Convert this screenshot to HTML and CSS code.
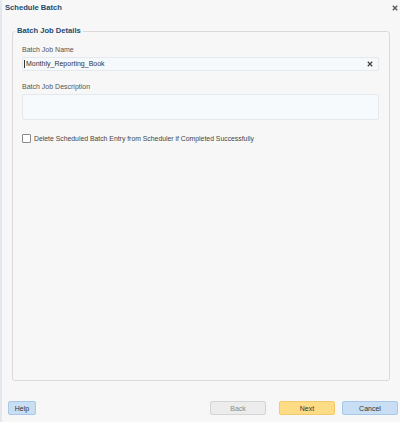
FILE: index.html
```html
<!DOCTYPE html>
<html>
<head>
<meta charset="utf-8">
<link rel="stylesheet" href="styles.css">
</head>
<body>
<div class="dialog">
  <div class="header">
    <span class="title">Schedule Batch</span>
    <svg class="close" width="6" height="6" viewBox="0 0 6 6"><path d="M0.8 0.8 L5.2 5.2 M5.2 0.8 L0.8 5.2" stroke="#555" stroke-width="1.3"/></svg>
  </div>
  <fieldset class="group">
    <legend class="legend">Batch Job Details</legend>
    <div class="field">
      <label class="label">Batch Job Name</label>
      <div class="input">
        <span class="value">Monthly_Reporting_Book</span>
        <svg class="clear" width="6" height="6" viewBox="0 0 6 6"><path d="M0.8 0.8 L5.2 5.2 M5.2 0.8 L0.8 5.2" stroke="#444" stroke-width="1.3"/></svg>
      </div>
    </div>
    <div class="field">
      <label class="label">Batch Job Description</label>
      <div class="textarea"></div>
    </div>
    <div class="check-row">
      <span class="checkbox"></span>
      <span class="check-label">Delete Scheduled Batch Entry from Scheduler if Completed Successfully</span>
    </div>
  </fieldset>
  <div class="footer">
    <button class="btn btn-help">Help</button>
    <div class="spacer"></div>
    <button class="btn btn-back">Back</button>
    <button class="btn btn-next">Next</button>
    <button class="btn btn-cancel">Cancel</button>
  </div>
</div>
</body>
</html>
```

FILE: styles.css
```css
html, body {
  margin: 0;
  padding: 0;
  background: #f7f7f7;
}
body {
  font-family: "Liberation Sans", Arial, sans-serif;
  font-size: 7px;
  color: #444;
}
.dialog {
  width: 400px;
  height: 422px;
  box-sizing: border-box;
  display: flex;
  flex-direction: column;
  border-left: 2px solid #e3e8ee;
}
.header {
  height: 26px;
  display: flex;
  align-items: flex-start;
  justify-content: space-between;
  padding: 3px 2px 0 3px;
  box-sizing: border-box;
}
.title {
  font-weight: bold;
  font-size: 7.6px;
  color: #1d4a70;
  line-height: 10px;
}
.close {
  margin-top: 2px;
}
.group {
  flex: 1;
  margin: 0 10px 0 10px;
  padding: 9px 10px 0 9px;
  border: 1px solid #dadada;
  border-radius: 3px;
  min-inline-size: 0;
  display: flex;
  flex-direction: column;
}
.legend {
  font-weight: bold;
  font-size: 7.6px;
  color: #1d4a70;
  padding: 0 2px;
  margin-left: -7px;
  line-height: 10px;
}
.field {
  display: flex;
  flex-direction: column;
}
.label {
  color: #555;
  line-height: 9px;
  margin-bottom: 3px;
}
.input {
  height: 14px;
  box-sizing: border-box;
  background: #f5f9fc;
  border: 1px solid #e4e9ee;
  border-radius: 2px;
  display: flex;
  align-items: center;
  padding: 0 5px 0 1px;
  margin-bottom: 11px;
}
.value {
  flex: 1;
  color: #333;
  border-left: 1px solid #333;
  padding-left: 1px;
  line-height: 8px;
}
.textarea {
  height: 26px;
  box-sizing: border-box;
  background: #f6fafd;
  border: 1px solid #e4e9ee;
  border-radius: 2px;
  margin-bottom: 14px;
}
.check-row {
  display: flex;
  align-items: center;
}
.checkbox {
  width: 9px;
  height: 9px;
  box-sizing: border-box;
  border: 1px solid #8a8a8a;
  background: #fff;
  border-radius: 1px;
  margin-right: 3px;
}
.check-label {
  color: #444;
  line-height: 9px;
  font-size: 6.85px;
}
.footer {
  display: flex;
  align-items: center;
  padding: 0 2px 7px 6px;
  margin-top: 20px;
}
.spacer {
  flex: 1;
}
.btn {
  height: 14px;
  box-sizing: border-box;
  font-family: "Liberation Sans", Arial, sans-serif;
  font-size: 7px;
  border-radius: 2px;
  padding: 0;
  border: 1px solid;
  color: #333;
}
.btn-help {
  width: 28px;
  background: #c8def4;
  border-color: #a9c7e7;
}
.btn-back {
  width: 56px;
  background: #ececec;
  border-color: #d4d4d4;
  color: #8a8a8a;
}
.btn-next {
  width: 56px;
  margin-left: 13px;
  background: #fedc85;
  border-color: #f3cb6c;
}
.btn-cancel {
  width: 56px;
  margin-left: 7px;
  background: #c8def4;
  border-color: #a9c7e7;
}
```
